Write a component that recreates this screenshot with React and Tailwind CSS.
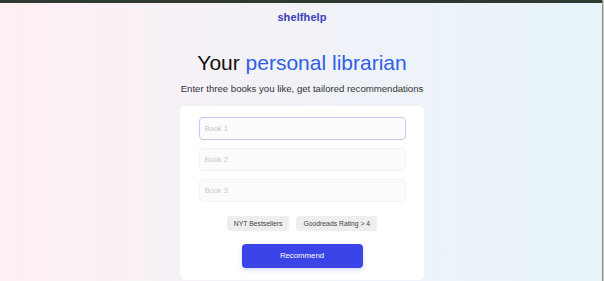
import { useState } from "react";

const filters = ["NYT Bestsellers", "Goodreads Rating > 4"];

const App = () => {
  const [books, setBooks] = useState(["", "", ""]);

  const updateBook = (index, value) =>
    setBooks((prev) => prev.map((b, i) => (i === index ? value : b)));

  return (
    <div className="relative flex h-[281px] w-[604px] flex-col overflow-hidden font-['Liberation_Sans',Arial,sans-serif]">
      <div className="h-[3px] bg-[#2e3a2f]" />
      <div className="flex flex-1 flex-col items-center bg-linear-to-r from-[#fdeff4] via-[#f1f2f8] to-[#e6f4f9]">
        <header className="flex h-[28px] items-center pt-[1px]">
          <span className="text-[11px] font-bold tracking-[0.1px] text-[#3a3fbb]">shelfhelp</span>
        </header>

        <h1 className="mt-[19px] text-[21px] leading-[26px] text-[#111]">
          Your <span className="text-[#2f60e2]">personal librarian</span>
        </h1>
        <p className="mt-[7px] text-[9.6px] leading-[12px] text-[#333]">
          Enter three books you like, get tailored recommendations
        </p>

        <div className="mt-[11px] flex w-[244px] flex-col items-center rounded-[5px] bg-white px-[18px] pt-[11px] pb-[12px]">
          <div className="flex w-[207px] flex-col gap-[8px]">
            {books.map((book, i) => (
              <input
                key={i}
                value={book}
                autoFocus={i === 0}
                onChange={(e) => updateBook(i, e.target.value)}
                placeholder={`Book ${i + 1}`}
                className={
                  i === 0
                    ? "h-[23px] rounded-[4px] border border-[#c9c5f2] bg-[#fcfcfe] px-[5px] text-[7.5px] text-[#333] caret-[#333] outline-none placeholder:text-[#c4c4c4]"
                    : "h-[23px] rounded-[4px] border border-[#f3f3f3] bg-[#fbfbfb] px-[5px] text-[7.5px] text-[#333] outline-none placeholder:text-[#cacaca]"
                }
              />
            ))}
          </div>

          <div className="mt-[14px] flex gap-[7px]">
            {filters.map((f) => (
              <button
                key={f}
                className="h-[15px] rounded-[3px] bg-[#eeeeee] px-[7px] text-[6.8px] leading-[15px] text-[#444]"
              >
                {f}
              </button>
            ))}
          </div>

          <button className="mt-[13px] h-[24px] w-[121px] rounded-[4px] bg-[#3a44e7] text-[7.8px] text-white shadow-[0_2px_4px_rgba(58,68,231,0.2)]">
            Recommend
          </button>
        </div>
      </div>
      <div className="absolute top-0 right-0 flex h-full">
        <div className="w-[1px] bg-[#8c918c]" />
        <div className="w-[1px] bg-[#c9ccc9]" />
      </div>
    </div>
  );
};

export default App;
